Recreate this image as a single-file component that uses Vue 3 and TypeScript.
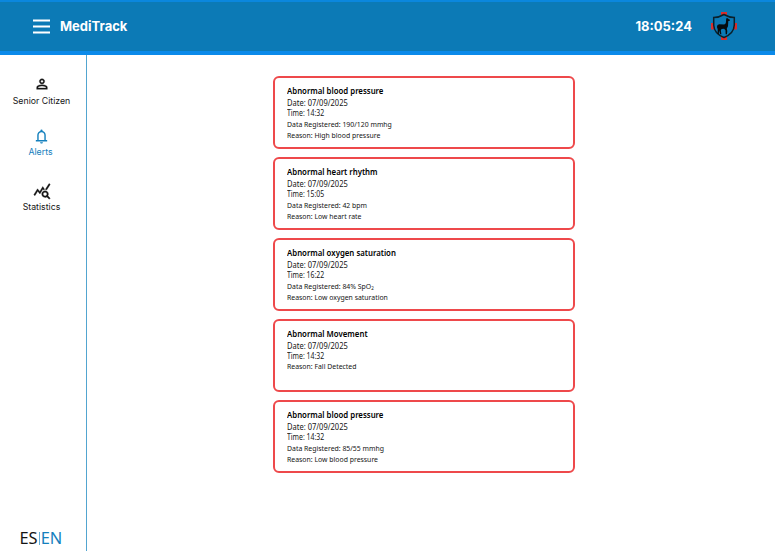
<script setup lang="ts">
interface Line {
  text: string
  sub?: string
  kind: string
}
interface Alert {
  title: string
  lines: Line[]
}

const date: Line = { text: 'Date: 07/09/2025', kind: 'date' }

const alerts: Alert[] = [
  {
    title: 'Abnormal blood pressure',
    lines: [
      date,
      { text: 'Time: 14:32', kind: 'time' },
      { text: 'Data Registered: 190/120 mmhg', kind: 'data' },
      { text: 'Reason: High blood pressure', kind: 'reason' },
    ],
  },
  {
    title: 'Abnormal heart rhythm',
    lines: [
      date,
      { text: 'Time: 15:05', kind: 'time' },
      { text: 'Data Registered: 42 bpm', kind: 'data' },
      { text: 'Reason: Low heart rate', kind: 'reason' },
    ],
  },
  {
    title: 'Abnormal oxygen saturation',
    lines: [
      date,
      { text: 'Time: 16:22', kind: 'time' },
      { text: 'Data Registered: 84% SpO', sub: '2', kind: 'data' },
      { text: 'Reason: Low oxygen saturation', kind: 'reason' },
    ],
  },
  {
    title: 'Abnormal Movement',
    lines: [date, { text: 'Time: 14:32', kind: 'time' }, { text: 'Reason: Fall Detected', kind: 'reason' }],
  },
  {
    title: 'Abnormal blood pressure',
    lines: [
      date,
      { text: 'Time: 14:32', kind: 'time' },
      { text: 'Data Registered: 85/55 mmhg', kind: 'data' },
      { text: 'Reason: Low blood pressure', kind: 'reason' },
    ],
  },
]
</script>

<template>
  <div class="page">
    <header class="topbar">
      <svg class="menu" viewBox="0 0 17 15"><path d="M0 1.500h17M0 7.500h17M0 13.500h17" /></svg>
      <h1 class="brand">MediTrack</h1>
      <span class="clock">18:05:24</span>
      <svg class="logo" viewBox="0 0 30 30">
        <path class="cross" d="M12 1h6v28h-6zM2 12h26v6.500h-26z" />
        <path class="shield" d="M15 3.500Q20 6.500 25.300 6.500V14Q25 22.500 15 26.500Q5 22.500 4.700 14V6.500Q10 6.500 15 3.500Z" />
        <path class="llama" d="M17.300 6.800l.7.900.9-.9.400 1.200 1.700.8-.2 1-1.500.3-.3 5.200-1.200 2.200.5 2.700-.4 3h-1.200l-.2-4-1.400-1.400-2.600.2-.7 1.500.6 3.700h-1.300l-1-3.600-.4 3.600H8.600l.1-5-.8-2.200.6-1.900 1.700-.9 5.100.4 1.500-1.400z" />
      </svg>
    </header>
    <div class="body">
      <aside class="sidebar">
        <nav class="nav">
          <a class="item senior">
            <svg class="icon" viewBox="0 -960 960 960"><path d="M480-480q-66 0-113-47t-47-113q0-66 47-113t113-47q66 0 113 47t47 113q0 66-47 113t-113 47ZM160-160v-112q0-34 17.500-62.500T224-378q62-31 126-46.500T480-440q66 0 130 15.500T736-378q29 15 46.500 43.500T800-272v112H160Zm80-80h480v-32q0-11-5.500-20T700-306q-54-27-109-40.500T480-360q-56 0-111 13.500T260-306q-9 5-14.500 14t-5.500 20v32Zm240-320q33 0 56.500-23.500T560-640q0-33-23.500-56.500T480-720q-33 0-56.500 23.500T400-640q0 33 23.500 56.500T480-560Z" /></svg>
            <span>Senior Citizen</span>
          </a>
          <a class="item alerts">
            <svg class="icon" viewBox="0 -960 960 960"><path d="M160-200v-80h80v-280q0-83 50-147.500T420-792v-28q0-25 17.500-42.500T480-880t42.500 17.500T540-820v28q80 20 130 84.500T720-560v280h80v80H160Zm320 120q-33 0-56.500-23.500T400-160h160q0 33-23.500 56.500T480-80ZM320-280h320v-280q0-66-47-113t-113-47q-66 0-113 47t-47 113v280Z" /></svg>
            <span>Alerts</span>
          </a>
          <a class="item stats">
            <svg class="icon" viewBox="0 0 24 24"><path d="M19.880 18.470c.44-.7.7-1.510.7-2.390 0-2.490-2.010-4.500-4.500-4.500s-4.500 2.010-4.500 4.500 2.010 4.500 4.490 4.500c.88 0 1.700-.26 2.390-.7L21.580 23 23 21.580l-3.120-3.110zm-3.800.11c-1.380 0-2.500-1.120-2.500-2.500s1.120-2.500 2.500-2.500 2.500 1.120 2.500 2.500-1.120 2.500-2.500 2.500zm-.36-8.500c-.74.02-1.450.18-2.100.45l-.55-.83-3.800 6.180-3.010-3.520-3.630 5.810L1 17l5-8 3 3.500L13 6l2.720 4.080zm2.590.5c-.64-.28-1.330-.45-2.050-.49L21.380 2 23 3.180l-4.690 7.400z" /></svg>
            <span>Statistics</span>
          </a>
        </nav>
        <div class="lang"><span>ES</span><i class="bar"></i><span class="current">EN</span></div>
      </aside>
      <main class="list">
        <article v-for="(alert, i) in alerts" :key="i" class="card">
          <h2 class="title"><span>{{ alert.title }}</span></h2>
          <p v-for="(line, n) in alert.lines" :key="n" class="line" :class="line.kind">
            <span>{{ line.text }}<small v-if="line.sub">{{ line.sub }}</small></span>
          </p>
        </article>
      </main>
    </div>
  </div>
</template>

<style>
body {
  background: #fff;
}
</style>

<style scoped>
.page {
  display: flex;
  flex-direction: column;
  height: 551px;
  overflow: hidden;
  font-family: Inter, sans-serif;
  color: #151515;
}
.topbar {
  box-sizing: border-box;
  height: 55px;
  flex: none;
  display: flex;
  align-items: center;
  padding: 0 36px 2px 33px;
  background: #0c7ab6;
  border-top: 2px solid #0b87de;
  border-bottom: 4px solid #0b8aea;
  color: #fff;
}
.menu {
  width: 17px;
  height: 15px;
  margin-top: 1px;
  stroke: #fff;
  stroke-width: 2;
}
.brand {
  margin: 0 0 0 10px;
  font-size: 13px;
  line-height: 16px;
  font-weight: 700;
}
.clock {
  margin-left: auto;
  font-size: 13px;
  line-height: 16px;
  font-weight: 700;
}
.logo {
  width: 30px;
  height: 30px;
  margin-left: 17px;
}
.cross {
  fill: #d92e2c;
}
.shield {
  fill: #0c7ab6;
  stroke: #0b202b;
  stroke-width: 1.500;
}
.llama {
  fill: #060b0e;
}
.body {
  flex: 1;
  display: flex;
}
.sidebar {
  box-sizing: border-box;
  width: 87px;
  display: flex;
  flex-direction: column;
  justify-content: space-between;
  border-right: 1px solid #52a5d0;
}
.nav {
  display: flex;
  flex-direction: column;
  padding-top: 21px;
}
.item {
  display: flex;
  flex-direction: column;
  align-items: center;
  font-size: 8.750px;
  line-height: 12px;
  padding-right: 4px;
}
.icon {
  fill: currentColor;
  stroke: currentColor;
  stroke-width: 20;
  width: 16px;
  height: 16px;
  margin: 0 0 3px 0;
}
.senior {
  padding-right: 3px;
}
.alerts {
  margin-top: 21px;
  padding-right: 5px;
  color: #1480bd;
}
.alerts .icon {
  stroke: none;
  width: 17px;
  height: 17px;
  margin: 0 0 1px 2px;
}
.stats {
  margin-top: 24px;
  padding-right: 3px;
}
.stats .icon {
  stroke-width: 0.400;
  width: 18px;
  height: 18px;
  margin-bottom: 1px;
}
.lang {
  display: flex;
  align-items: center;
  height: 18px;
  padding: 0 0 4px 19.500px;
  font: 16.400px/18px 'Noto Sans', sans-serif;
}
.bar {
  width: 1px;
  height: 13px;
  margin: 0 1px;
  background: #67b0d7;
}
.current {
  color: #1480bd;
}
.list {
  flex: 1;
  display: flex;
  flex-direction: column;
  gap: 8px;
  padding: 21px 0 0 186px;
}
.card {
  box-sizing: border-box;
  width: 302px;
  height: 73px;
  padding: 6px 12px 0;
  border: 2px solid #ee494b;
  border-radius: 6px;
  font-family: 'Noto Sans', sans-serif;
  white-space: nowrap;
}
.title {
  margin: 0;
  font-size: 8.400px;
  line-height: 13px;
  font-weight: 600;
  color: #000;
}
.title span,
.line > span {
  display: block;
  width: max-content;
  transform: scaleX(0.908);
  transform-origin: 0 50%;
}
.title span {
  transform: scaleX(0.932);
}
.line {
  margin: 0;
  font-size: 8.300px;
  line-height: 10px;
}
.time > span {
  transform: scaleX(0.83);
}
.date {
  margin-top: 1px;
}
.data,
.reason {
  font-size: 7.600px;
  line-height: 11px;
}
.data {
  margin-top: 1px;
}
small {
  font-size: 5px;
  line-height: 1;
  vertical-align: -1px;
}
</style>
